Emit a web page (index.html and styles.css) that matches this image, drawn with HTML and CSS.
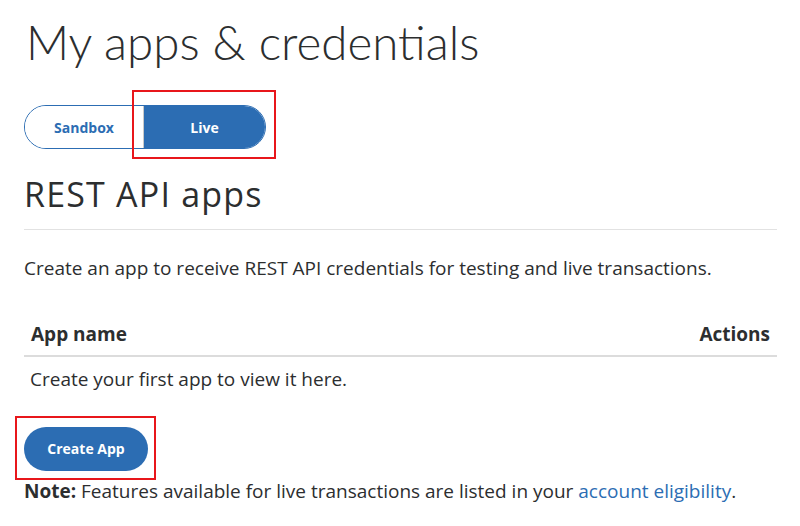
FILE: index.html
```html
<!DOCTYPE html>
<html>
<head>
<meta charset="utf-8">
<link rel="stylesheet" href="styles.css">
</head>
<body>
<main class="page">
  <h1 class="title">My apps &amp; credentials</h1>
  <div class="toggle-wrap">
    <div class="toggle">
      <button class="seg seg-off">Sandbox</button>
      <button class="seg seg-on">Live</button>
    </div>
    <span class="mark mark-live"></span>
  </div>
  <h2 class="section-title">REST API apps</h2>
  <hr class="rule">
  <p class="intro">Create an app to receive REST API credentials for testing and live transactions.</p>
  <table class="apps">
    <thead>
      <tr><th class="col-name">App name</th><th class="col-actions">Actions</th></tr>
    </thead>
    <tbody>
      <tr><td colspan="2">Create your first app to view it here.</td></tr>
    </tbody>
  </table>
  <div class="create-wrap">
    <button class="create">Create App</button>
    <span class="mark mark-create"></span>
  </div>
  <p class="note"><strong>Note:</strong> Features available for live transactions are listed in your <a href="#">account eligibility</a>.</p>
</main>
</body>
</html>
```
FILE: styles.css
```css
* { box-sizing: border-box; }
html, body { margin: 0; padding: 0; background: #fff; }
body {
  font-family: "Open Sans", Lato, sans-serif;
  color: #2c2e2f;
}
.page {
  padding: 0 23px 0 24px;
}
.title {
  margin: 14px 0 0 2px;
  font-family: Lato, "Open Sans", sans-serif;
  font-size: 47.5px;
  font-weight: 300;
  line-height: 56.4px;
}
.toggle-wrap {
  position: relative;
  margin-top: 35px;
  width: 242px;
}
.toggle {
  display: flex;
  height: 44px;
  border: 1px solid #2c6db3;
  border-radius: 22px;
  overflow: hidden;
}
.seg {
  border: 0;
  margin: 0;
  font-family: inherit;
  font-size: 14px;
  font-weight: 700;
  cursor: pointer;
}
.seg-off {
  width: 119px;
  background: #fff;
  color: #2c6db3;
  border-right: 1px solid #c9c9c9;
}
.seg-on {
  flex: 1;
  background: #2c6db3;
  color: #fff;
}
.mark {
  position: absolute;
  border: 2px solid #e8161b;
  pointer-events: none;
}
.mark-live {
  left: 108px;
  top: -15px;
  width: 144px;
  height: 69px;
}
.section-title {
  margin: 25px 0 0 0;
  font-size: 34px;
  font-weight: 400;
  letter-spacing: 1.2px;
  line-height: 1.2;
}
.rule {
  margin: 14px 0 0;
  border: 0;
  border-top: 1px solid #e2e2e2;
  height: 0;
}
.intro {
  margin: 27px 0 0;
  font-size: 19px;
  line-height: 1.2;
}
.apps {
  width: 100%;
  margin-top: 43px;
  border-collapse: collapse;
  font-size: 19px;
}
.apps th {
  padding: 0 7px 9px;
  font-weight: 700;
  text-align: left;
  border-bottom: 2px solid #dcdcdc;
  line-height: 1.2;
}
.apps th.col-actions { text-align: right; }
.apps td {
  padding: 11px 6px 0;
  line-height: 1.2;
}
.create-wrap {
  position: relative;
  margin-top: 36px;
  width: 124px;
}
.create {
  display: block;
  width: 124px;
  height: 44px;
  border: 0;
  border-radius: 22px;
  background: #2c6db3;
  color: #fff;
  font-family: inherit;
  font-size: 14px;
  font-weight: 700;
}
.mark-create {
  left: -9px;
  top: -11px;
  width: 141px;
  height: 64px;
}
.note {
  margin: 9px 0 0;
  font-size: 19px;
  line-height: 1.2;
}
.note a {
  color: #2c6db3;
  text-decoration: none;
}
```
